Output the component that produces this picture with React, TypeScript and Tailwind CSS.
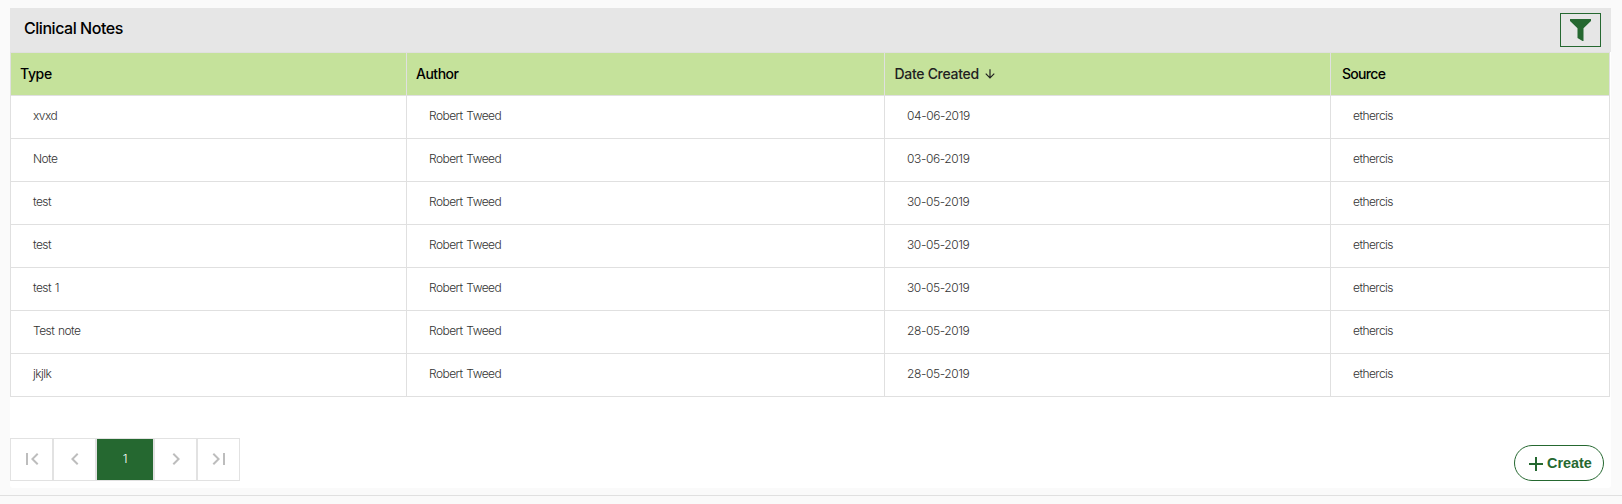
import React from "react";

type Note = { type: string; author: string; date: string; source: string };

const author = "Robert Tweed";
const notes: Note[] = [
  { type: "xvxd", author, date: "04-06-2019", source: "ethercis" },
  { type: "Note", author, date: "03-06-2019", source: "ethercis" },
  { type: "test", author, date: "30-05-2019", source: "ethercis" },
  { type: "test", author, date: "30-05-2019", source: "ethercis" },
  { type: "test 1", author, date: "30-05-2019", source: "ethercis" },
  { type: "Test note", author, date: "28-05-2019", source: "ethercis" },
  { type: "jkjlk", author, date: "28-05-2019", source: "ethercis" },
];

const columns = "grid grid-cols-[396px_478px_446px_279px]";
const head = "flex items-center border-r border-b border-[#e0e0e0] pb-px";
const cell = "flex items-center border-r border-b border-[#e0e0e0] pl-[22px] pb-[3px]";

function PageButton({ label, path }: { label: string; path: string }) {
  return (
    <button
      aria-label={label}
      className="flex h-[43px] w-[43px] items-center justify-center border border-[#e2e2e2] bg-white pb-[2px] text-[#bdbdbd]"
    >
      <svg viewBox="0 0 24 24" className="h-6 w-6" fill="currentColor">
        <path d={path} />
      </svg>
    </button>
  );
}

export default function App() {
  return (
    <div className="h-[504px] w-[1622px] bg-[#fafafa] pt-2 font-['Inter','Liberation_Sans',sans-serif]">
      <main className="ml-[10px] flex h-[480px] w-[1601px] flex-col rounded-b-[3px] bg-white">
        <header className="flex h-11 shrink-0 items-start justify-between bg-[#e6e6e6] pt-[5px] pr-[10px] pl-[14px]">
          <h1 className="pt-[3px] text-[16px] leading-6 font-medium tracking-[-0.46px] text-black">Clinical Notes</h1>
          <button
            aria-label="Filter"
            className="flex h-[34px] w-[41px] items-start justify-center border border-[#256830] pt-[5px] text-[#256830]"
          >
            <svg width="21" height="22" viewBox="0 0 21 22" fill="currentColor">
              <path d="M0 0h21v2L13.5 9.2V22h-1L7.5 19V9.2L0 2z" />
            </svg>
          </button>
        </header>

        <section className="w-[1600px] border-t border-l border-[#e0e0e0]">
          <div className={`${columns} h-[43px] bg-[#c5e29b] text-[14px] font-medium text-black`}>
            <div className={`${head} pl-[9px]`}><span className="tracking-[-0.35px]">Type</span></div>
            <div className={`${head} pl-[9px]`}><span className="tracking-[-0.5px]">Author</span></div>
            <div className={`${head} gap-1 pl-[9.5px]`}>
              <span className="tracking-[-0.3px] text-[#212121]">Date Created</span>
              <svg width="14" height="14" viewBox="0 0 24 24" fill="#212121">
                <path d="M20 12l-1.41-1.41L13 16.17V4h-2v12.17l-5.58-5.59L4 12l8 8 8-8z" />
              </svg>
            </div>
            <div className={`${head} pl-[11px]`}><span className="tracking-[-0.7px]">Source</span></div>
          </div>
          {notes.map((n, i) => (
            <div key={i} className={`${columns} h-[43px] text-[12px] font-light tracking-[-0.55px] text-[#333] [word-spacing:1px]`}>
              <div className={cell}>{n.type}</div>
              <div className={cell}>{n.author}</div>
              <div className={`${cell} tracking-[-0.4px]`}>{n.date}</div>
              <div className={cell}>{n.source}</div>
            </div>
          ))}
        </section>

        <footer className="mt-[41px] flex items-start justify-between pr-[7px]">
          <nav className="flex">
            <PageButton label="First page" path="M18.41 16.59L13.82 12l4.59-4.59L17 6l-6 6 6 6zM6 6h2v12H6z" />
            <PageButton label="Previous page" path="M15.41 7.41L14 6l-6 6 6 6 1.41-1.41L10.83 12z" />
            <button className="h-[43px] w-[58px] border border-[#e2e2e2] bg-[#256830] pb-[2px] text-[12px] font-light text-white">
              1
            </button>
            <PageButton label="Next page" path="M10 6L8.59 7.41 13.17 12l-4.58 4.59L10 18l6-6z" />
            <PageButton label="Last page" path="M5.59 7.41L10.18 12l-4.59 4.59L7 18l6-6-6-6zM16 6h2v12h-2z" />
          </nav>
          <button className="mt-[7px] flex h-9 w-[90px] items-center rounded-full border border-[#256830] pt-px pl-[14px] font-['Liberation_Sans',sans-serif] text-[14.4px] font-bold text-[#256830]">
            <svg width="14" height="14" viewBox="0 0 14 14" fill="currentColor" className="mr-1">
              <path d="M6 0h2v6h6v2H8v6H6V8H0V6h6z" />
            </svg>
            Create
          </button>
        </footer>
      </main>
      <hr className="mt-[7px] border-t border-[#e0e0e0]" />
    </div>
  );
}
